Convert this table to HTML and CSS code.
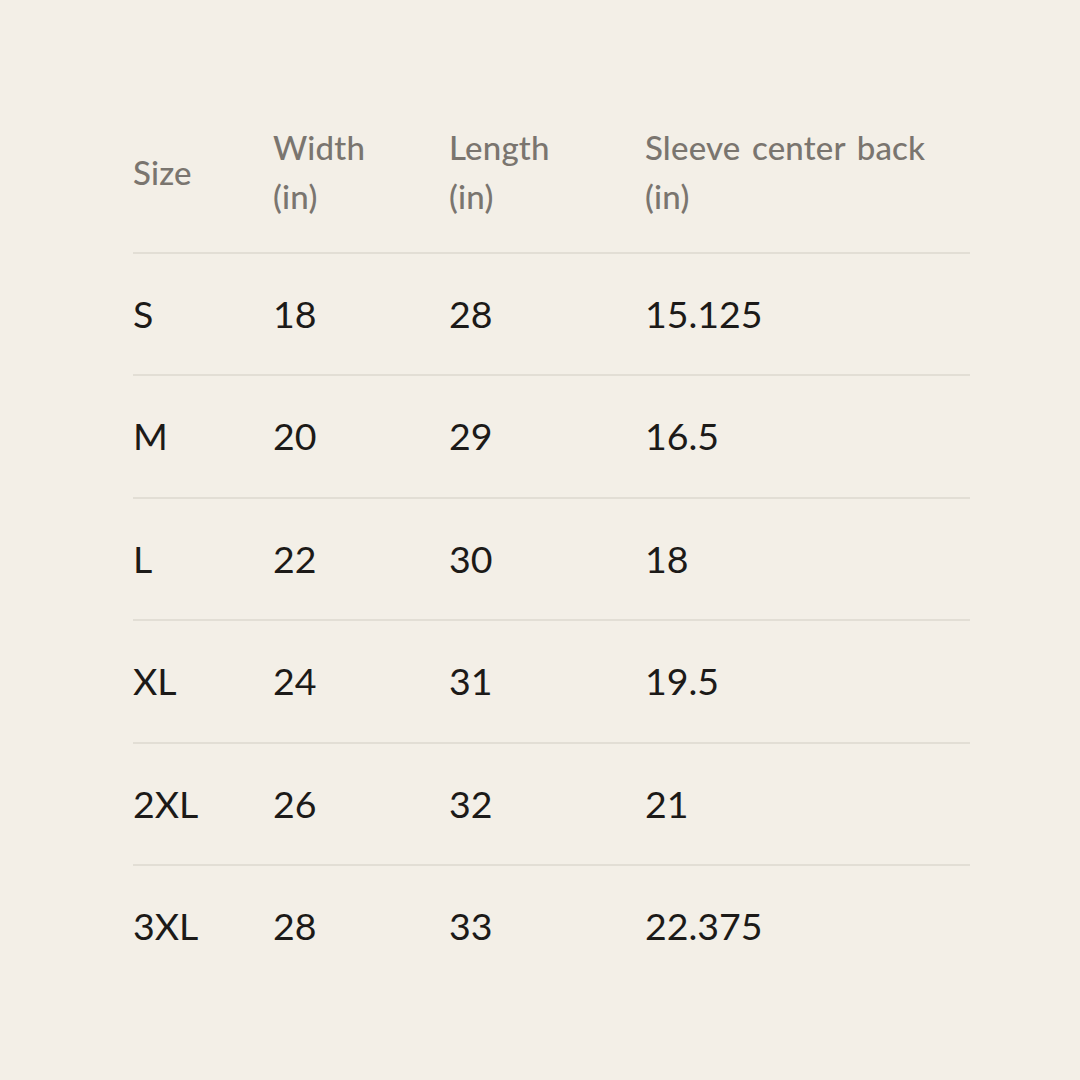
FILE: index.html
```html
<!DOCTYPE html>
<html lang="en">
<head>
<meta charset="utf-8">
<title>Size chart</title>
<link rel="stylesheet" href="styles.css">
</head>
<body>
<main class="page">
  <table class="chart">
    <thead>
      <tr>
        <th class="c-size">Size</th>
        <th class="c-width">Width<br>(in)</th>
        <th class="c-length">Length<br>(in)</th>
        <th class="c-sleeve">Sleeve center back<br>(in)</th>
      </tr>
    </thead>
    <tbody>
      <tr><td>S</td><td>18</td><td>28</td><td>15.125</td></tr>
      <tr><td>M</td><td>20</td><td>29</td><td>16.5</td></tr>
      <tr><td>L</td><td>22</td><td>30</td><td>18</td></tr>
      <tr><td>XL</td><td>24</td><td>31</td><td>19.5</td></tr>
      <tr><td>2XL</td><td>26</td><td>32</td><td>21</td></tr>
      <tr><td>3XL</td><td>28</td><td>33</td><td>22.375</td></tr>
    </tbody>
  </table>
</main>
</body>
</html>
```

FILE: styles.css
```css
html, body {
  margin: 0;
  padding: 0;
  background: #f3efe7;
}

body {
  width: 1080px;
  height: 1080px;
  font-family: Lato, "Noto Sans", sans-serif;
  color: #1c1a18;
}

.page {
  padding: 99px 110px 0 133px;
}

.chart {
  width: 837px;
  border-collapse: separate;
  border-spacing: 0;
  table-layout: fixed;
}

.c-size { width: 140px; }
.c-width { width: 176px; }
.c-length { width: 196px; }
.c-sleeve { width: 325px; }

.chart th {
  text-align: left;
  vertical-align: middle;
  font-weight: 500;
  font-size: 33px;
  letter-spacing: 0.2px;
  word-spacing: 3px;
  line-height: 49px;
  color: #7a756f;
  padding: 24px 0 31px 0;
  border-bottom: 2px solid #e2ded5;
}

.chart td {
  text-align: left;
  vertical-align: middle;
  font-size: 37.5px;
  line-height: 40.4px;
  padding: 40px 0;
  border-bottom: 2px solid #e2ded5;
}

.chart tbody tr:last-child td {
  border-bottom: none;
}
```
